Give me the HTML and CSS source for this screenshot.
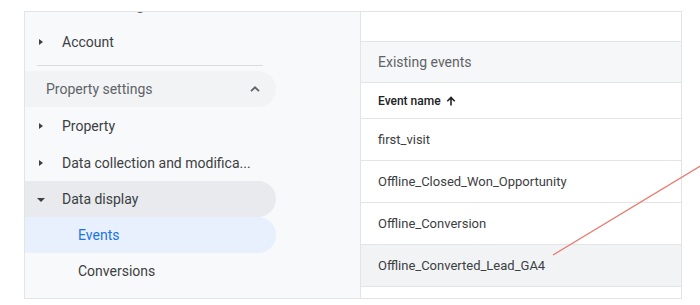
FILE: index.html
```html
<!DOCTYPE html>
<html>
<head>
<meta charset="utf-8">
<link rel="stylesheet" href="styles.css">
</head>
<body>
<div class="frame">
  <nav class="side">
    <div class="clip-head"><div class="clip-text">Account settings</div></div>
    <div class="row"><span class="tri-r"></span><span>Account</span></div>
    <div class="divider"></div>
    <div class="pill section"><span>Property settings</span>
      <svg class="chev" width="12" height="8" viewBox="0 0 12 8"><path d="M2 6.2 L6 2.3 L10 6.2" fill="none" stroke="#5f6368" stroke-width="1.8"/></svg>
    </div>
    <div class="row tall"><span class="tri-r"></span><span>Property</span></div>
    <div class="row"><span class="tri-r"></span><span>Data collection and modifica...</span></div>
    <div class="pill open row"><span class="tri-d"></span><span>Data display</span></div>
    <div class="pill active sub">Events</div>
    <div class="row sub">Conversions</div>
  </nav>
  <section class="main">
    <div class="blank"></div>
    <div class="card-title">Existing events</div>
    <div class="thead">Event name
      <svg class="up" width="10" height="10" viewBox="0 0 10 10"><path d="M5 9.5 V1.8 M1.3 5.2 L5 1.5 L8.7 5.2" fill="none" stroke="#202124" stroke-width="1.6"/></svg>
    </div>
    <div class="trow">first_visit</div>
    <div class="trow">Offline_Closed_Won_Opportunity</div>
    <div class="trow">Offline_Conversion</div>
    <div class="trow hl">Offline_Converted_Lead_GA4</div>
    <div class="tail"></div>
  </section>
</div>
<svg class="annot" width="700" height="305" viewBox="0 0 700 305"><line x1="553" y1="255" x2="702" y2="165" stroke="#e9786c" stroke-width="1.4"/></svg>
</body>
</html>
```
FILE: styles.css
```css
html, body { margin: 0; padding: 0; background: #fff; }
body {
  font-family: Roboto, "Noto Sans", Arial, sans-serif;
  width: 700px; height: 305px; overflow: hidden; position: relative;
}
.frame {
  display: flex;
  margin: 11px 0 0 24px;
  width: 656px;
  height: 286px;
  border: 1px solid #e3e4e6;
}
.side {
  width: 335px;
  background: #f8f9fa;
  border-right: 1px solid #e3e4e6;
  display: flex;
  flex-direction: column;
  overflow: hidden;
}
.clip-head { height: 12px; overflow: hidden; flex: none; }
.clip-text {
  margin-top: -17px; padding-left: 21px;
  font-size: 14px; line-height: 20px; color: #5f6368;
}
.row {
  height: 36px; flex: none;
  display: flex; align-items: center;
  font-size: 14px; color: #3c4043;
  padding-left: 14px;
}
.row.tall { height: 38px; }
.tri-r {
  width: 0; height: 0;
  border-top: 3.5px solid transparent;
  border-bottom: 3.5px solid transparent;
  border-left: 4px solid #3c4043;
  margin-right: 19px;
  margin-left: 0;
}
.tri-d {
  width: 0; height: 0;
  border-left: 4px solid transparent;
  border-right: 4px solid transparent;
  border-top: 4px solid #3c4043;
  margin-left: -2px;
  margin-right: 17px;
  margin-top: 2px;
}
.divider {
  height: 1px; background: #dadce0;
  margin: 5px 0 5px 12px; width: 226px; flex: none;
}
.pill {
  width: 251px; height: 36px; box-sizing: border-box;
  border-radius: 0 18px 18px 0; flex: none;
  display: flex; align-items: center;
}
.section {
  background: #f1f3f4;
  color: #5f6368; font-size: 14px;
  padding-left: 21px; padding-right: 15px;
  justify-content: space-between;
}
.open { background: #e8eaed; }
.sub { padding-left: 53px; font-size: 14px; color: #3c4043; }
.active { background: #e8f0fe; color: #1a73e8; }
.main { flex: 1; display: flex; flex-direction: column; background: #fff; }
.blank { height: 29px; border-bottom: 1px solid #e3e4e6; flex: none; }
.card-title {
  border-bottom: 1px solid #e3e4e6; flex: none;
  background: #f6f7f9; color: #5f6368; font-size: 14px;
  display: flex; align-items: center; padding-left: 17px;
  padding-bottom: 1px; box-sizing: border-box; height: 41px;
}
.thead {
  height: 35px; border-bottom: 1px solid #e3e4e6; flex: none;
  font-size: 12px; font-weight: 500; color: #202124;
  display: flex; align-items: center; padding-left: 17px;
}
.up { margin-left: 5px; }
.trow {
  height: 41px; border-bottom: 1px solid #e3e4e6; flex: none;
  font-size: 13px; color: #3c4043;
  display: flex; align-items: center; padding-left: 17px;
}
.hl { background: #f1f3f4; }
.tail { flex: 1; }
.annot { position: absolute; left: 0; top: 0; pointer-events: none; }
```
